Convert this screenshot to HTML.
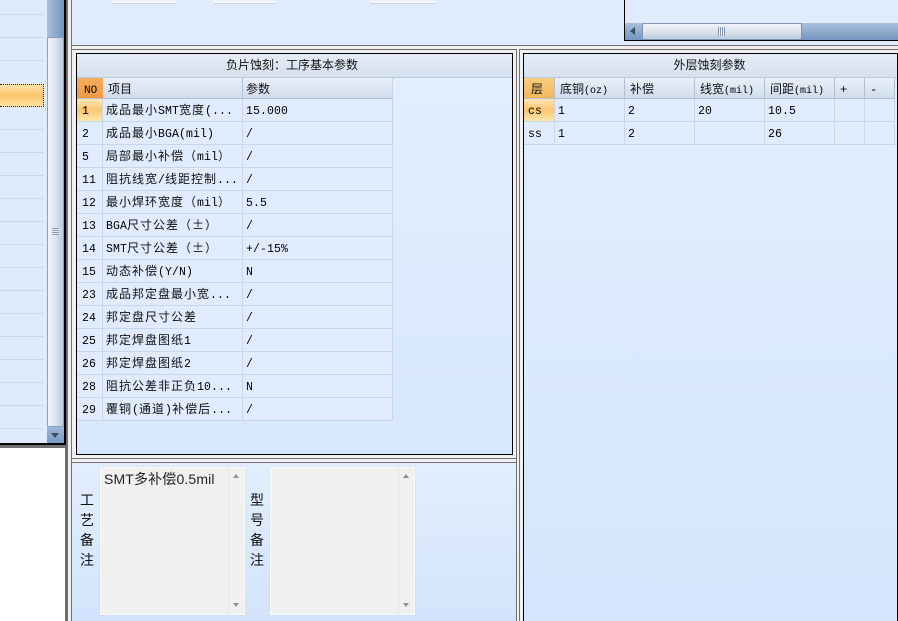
<!DOCTYPE html>
<html><head><meta charset="utf-8">
<style>
html,body{margin:0;padding:0}
body{width:898px;height:621px;overflow:hidden;position:relative;background:#fff;font:12px "WenQuanYi Zen Hei","Noto Sans CJK SC",sans-serif;color:#111}
div{position:absolute;box-sizing:border-box}
i{font:normal 11.5px "Liberation Mono",monospace;letter-spacing:.1px;color:#000}
.t{white-space:nowrap;line-height:14px}
.g{background:#6f6f6f}
.k{background:#000}
.hd{height:21px;top:78px;background:linear-gradient(#e9eff8,#d1dcec);border-right:1px solid #aebfd6;border-bottom:1px solid #aebfd6;line-height:21px;padding-left:5px;white-space:nowrap}
.hd i{font-size:10px;letter-spacing:0}
.r{height:23px;background:#e0ecfd;border-right:1px solid #c6d7ec;border-bottom:1px solid #c6d7ec;line-height:21px;padding-left:3px;white-space:nowrap;letter-spacing:1px}
.l{left:0;width:44px;height:1px;background:#c9d9ec}
</style></head><body>
<!-- left list -->
<div style="left:0;top:0;width:47px;height:444px;background:#dfebfc"></div>
<div class="l" style="top:14px"></div><div class="l" style="top:37px"></div><div class="l" style="top:60px"></div><div class="l" style="top:129px"></div><div class="l" style="top:152px"></div><div class="l" style="top:175px"></div><div class="l" style="top:198px"></div><div class="l" style="top:221px"></div><div class="l" style="top:244px"></div><div class="l" style="top:267px"></div><div class="l" style="top:290px"></div><div class="l" style="top:313px"></div><div class="l" style="top:336px"></div><div class="l" style="top:359px"></div><div class="l" style="top:382px"></div><div class="l" style="top:405px"></div><div class="l" style="top:428px"></div>
<div style="left:0;top:84px;width:44px;height:23px;background:linear-gradient(#fde2ad,#fbc36a 50%,#fee5a6);border:1px dotted #222;border-left:0"></div>
<!-- left scrollbar -->
<div style="left:47px;top:0;width:17px;height:444px;background:linear-gradient(90deg,#a8c0dc,#7595c1)"></div>
<div style="left:47px;top:37px;width:17px;height:390px;background:linear-gradient(90deg,#f0f3f8,#dfe5ee 45%,#bccada);border:1px solid #8aa0bf;border-radius:2px"></div>
<div style="left:52px;top:228px;width:7px;height:7px;background:repeating-linear-gradient(#8a9ab0 0 1px,#e8edf3 1px 2px)"></div>
<div style="left:47px;top:427px;width:17px;height:16px;background:linear-gradient(#9db6d6,#7a9ac4)"></div>
<div style="left:51px;top:433px;width:0;height:0;border:4px solid transparent;border-top:5px solid #3b4a60;border-bottom:0"></div>
<!-- frame strokes -->
<div class="k" style="left:64px;top:0;width:2px;height:445px"></div>
<div class="k" style="left:0;top:443px;width:66px;height:2px"></div>
<div class="g" style="left:0;top:445px;width:68px;height:3px"></div>
<div class="g" style="left:65px;top:445px;width:3px;height:176px"></div>
<div class="g" style="left:66px;top:0;width:2px;height:445px"></div>
<div style="left:68px;top:0;width:3px;height:621px;background:#f0f0f0"></div>
<div class="g" style="left:71px;top:0;width:1px;height:621px"></div>
<!-- top panel -->
<div style="left:72px;top:0;width:826px;height:45px;background:#e0ecfe"></div>
<div style="left:113px;top:0;width:62px;height:3px;background:#eef3fa;border:1px solid #f7f9fc;border-top:0;box-shadow:0 1px 0 #c6d4e6"></div>
<div style="left:214px;top:0;width:62px;height:3px;background:#eef3fa;border:1px solid #f7f9fc;border-top:0;box-shadow:0 1px 0 #c6d4e6"></div>
<div style="left:370px;top:0;width:66px;height:3px;background:#eef3fa;border:1px solid #f7f9fc;border-top:0;box-shadow:0 1px 0 #c6d4e6"></div>
<div class="k" style="left:624px;top:0;width:1px;height:41px"></div>
<div class="k" style="left:624px;top:40px;width:274px;height:1px"></div>
<div style="left:625px;top:23px;width:273px;height:17px;background:linear-gradient(#a8c0dc,#7595c1)"></div>
<div style="left:630px;top:27px;width:0;height:0;border:4px solid transparent;border-right:5px solid #3b4a60;border-left:0"></div>
<div style="left:642px;top:23px;width:160px;height:17px;background:linear-gradient(#f0f3f8,#dfe5ee 45%,#bccada);border:1px solid #7e94b5;border-radius:2px"></div>
<div style="left:718px;top:27px;width:7px;height:9px;background:repeating-linear-gradient(90deg,#8a9ab0 0 1px,#e8edf3 1px 2px)"></div>
<div style="left:72px;top:45px;width:826px;height:4px;background:#f0f0f0"></div>
<div class="g" style="left:72px;top:45px;width:826px;height:1px"></div>
<div class="g" style="left:72px;top:49px;width:445px;height:1px"></div>
<div class="g" style="left:519px;top:49px;width:379px;height:1px"></div>
<div style="left:72px;top:50px;width:444px;height:412px;background:#f0f0f0"></div>
<div style="left:517px;top:46px;width:2px;height:575px;background:#f0f0f0"></div>
<div class="g" style="left:516px;top:49px;width:1px;height:572px"></div>
<div class="g" style="left:519px;top:49px;width:1px;height:572px"></div>
<div style="left:520px;top:50px;width:378px;height:571px;background:#f0f0f0"></div>
<!-- left panel -->
<div style="left:76px;top:53px;width:437px;height:402px;border:1px solid #000;background:linear-gradient(#e3eefd,#d7e8fd)"></div>
<div class="t" style="left:77px;top:54px;width:435px;height:24px;background:linear-gradient(#e5ecf6,#d6e0ef);border-bottom:1px solid #b9c9de"></div>
<div class="t" style="left:77px;top:54px;width:430px;height:24px;line-height:22px;text-align:center">负片蚀刻：工序基本参数</div>
<div class="hd" style="left:77px;width:26px;background:linear-gradient(#f6ad5f,#ef9a45);padding-left:7px;border-right:0"><i style="font-size:11px">NO</i></div>
<div class="hd" style="left:103px;width:140px">项目</div>
<div class="hd" style="left:243px;width:150px;border-right:1px solid #c6d7ec;padding-left:3px">参数</div>

<div class="r" style="left:77px;top:99px;width:26px;padding-left:5px;background:linear-gradient(#fde6b8,#fbc56d 50%,#fee8ad)"><i>1</i></div><div class="r" style="left:103px;top:99px;width:140px">成品最小<i>SMT</i>宽度<i>(...</i></div><div class="r" style="left:243px;top:99px;width:150px"><i>15.000</i></div>
<div class="r" style="left:77px;top:122px;width:26px;padding-left:5px"><i>2</i></div><div class="r" style="left:103px;top:122px;width:140px">成品最小<i>BGA(mil)</i></div><div class="r" style="left:243px;top:122px;width:150px"><i>/</i></div>
<div class="r" style="left:77px;top:145px;width:26px;padding-left:5px"><i>5</i></div><div class="r" style="left:103px;top:145px;width:140px">局部最小补偿（<i>mil</i>）</div><div class="r" style="left:243px;top:145px;width:150px"><i>/</i></div>
<div class="r" style="left:77px;top:168px;width:26px;padding-left:5px"><i>11</i></div><div class="r" style="left:103px;top:168px;width:140px">阻抗线宽<i>/</i>线距控制<i>...</i></div><div class="r" style="left:243px;top:168px;width:150px"><i>/</i></div>
<div class="r" style="left:77px;top:191px;width:26px;padding-left:5px"><i>12</i></div><div class="r" style="left:103px;top:191px;width:140px">最小焊环宽度（<i>mil</i>）</div><div class="r" style="left:243px;top:191px;width:150px"><i>5.5</i></div>
<div class="r" style="left:77px;top:214px;width:26px;padding-left:5px"><i>13</i></div><div class="r" style="left:103px;top:214px;width:140px"><i>BGA</i>尺寸公差（±）</div><div class="r" style="left:243px;top:214px;width:150px"><i>/</i></div>
<div class="r" style="left:77px;top:237px;width:26px;padding-left:5px"><i>14</i></div><div class="r" style="left:103px;top:237px;width:140px"><i>SMT</i>尺寸公差（±）</div><div class="r" style="left:243px;top:237px;width:150px"><i>+/-15%</i></div>
<div class="r" style="left:77px;top:260px;width:26px;padding-left:5px"><i>15</i></div><div class="r" style="left:103px;top:260px;width:140px">动态补偿<i>(Y/N)</i></div><div class="r" style="left:243px;top:260px;width:150px"><i>N</i></div>
<div class="r" style="left:77px;top:283px;width:26px;padding-left:5px"><i>23</i></div><div class="r" style="left:103px;top:283px;width:140px">成品邦定盘最小宽<i>...</i></div><div class="r" style="left:243px;top:283px;width:150px"><i>/</i></div>
<div class="r" style="left:77px;top:306px;width:26px;padding-left:5px"><i>24</i></div><div class="r" style="left:103px;top:306px;width:140px">邦定盘尺寸公差</div><div class="r" style="left:243px;top:306px;width:150px"><i>/</i></div>
<div class="r" style="left:77px;top:329px;width:26px;padding-left:5px"><i>25</i></div><div class="r" style="left:103px;top:329px;width:140px">邦定焊盘图纸<i>1</i></div><div class="r" style="left:243px;top:329px;width:150px"><i>/</i></div>
<div class="r" style="left:77px;top:352px;width:26px;padding-left:5px"><i>26</i></div><div class="r" style="left:103px;top:352px;width:140px">邦定焊盘图纸<i>2</i></div><div class="r" style="left:243px;top:352px;width:150px"><i>/</i></div>
<div class="r" style="left:77px;top:375px;width:26px;padding-left:5px"><i>28</i></div><div class="r" style="left:103px;top:375px;width:140px">阻抗公差非正负<i>10...</i></div><div class="r" style="left:243px;top:375px;width:150px"><i>N</i></div>
<div class="r" style="left:77px;top:398px;width:26px;padding-left:5px"><i>29</i></div><div class="r" style="left:103px;top:398px;width:140px">覆铜<i>(</i>通道<i>)</i>补偿后<i>...</i></div><div class="r" style="left:243px;top:398px;width:150px"><i>/</i></div>

<!-- bottom-left panel -->
<div class="g" style="left:72px;top:458px;width:445px;height:1px"></div>
<div class="g" style="left:72px;top:462px;width:445px;height:1px"></div>
<div style="left:72px;top:463px;width:444px;height:158px;background:linear-gradient(#e2eefd,#d2e4fc)"></div>
<div class="t" style="left:80px;top:490px;width:14px;font-size:14px;line-height:20px;white-space:normal">工艺备注</div>
<div class="t" style="left:250px;top:490px;width:14px;font-size:14px;line-height:20px;white-space:normal">型号备注</div>
<div style="left:100px;top:467px;width:145px;height:148px;background:#f0f0f0;border:1px solid #fafafa;box-shadow:0 0 1px #b9c6d8"></div>
<div style="left:228px;top:468px;width:1px;height:146px;background:#e4e4e4"></div>
<div class="t" style="left:104px;top:471px;font:14px/16px 'Liberation Sans','Noto Sans CJK SC',sans-serif;letter-spacing:.15px;color:#222">SMT多补偿0.5mil</div>
<div style="left:233px;top:474px;border:3px solid transparent;border-bottom:4px solid #909090;border-top:0"></div>
<div style="left:233px;top:603px;border:3px solid transparent;border-top:4px solid #909090;border-bottom:0"></div>
<div style="left:270px;top:467px;width:145px;height:148px;background:#f0f0f0;border:1px solid #fafafa;box-shadow:0 0 1px #b9c6d8"></div>
<div style="left:398px;top:468px;width:1px;height:146px;background:#e4e4e4"></div>
<div style="left:403px;top:474px;border:3px solid transparent;border-bottom:4px solid #909090;border-top:0"></div>
<div style="left:403px;top:603px;border:3px solid transparent;border-top:4px solid #909090;border-bottom:0"></div>

<!-- right panel -->
<div style="left:523px;top:53px;width:375px;height:568px;border:1px solid #000;border-width:1px 1px 0 1px;background:linear-gradient(#e3eefd,#d3e6fd)"></div>
<div class="t" style="left:524px;top:54px;width:373px;height:24px;background:linear-gradient(#e5ecf6,#d6e0ef);border-bottom:1px solid #b9c9de"></div>
<div class="t" style="left:524px;top:54px;width:371px;height:24px;line-height:22px;text-align:center">外层蚀刻参数</div>
<div class="hd" style="left:524px;width:31px;background:linear-gradient(#f8cd7e,#f4b85a);padding-left:7px">层</div>
<div class="hd" style="left:555px;width:70px">底铜<i>(oz)</i></div>
<div class="hd" style="left:625px;width:70px">补偿</div>
<div class="hd" style="left:695px;width:70px">线宽<i>(mil)</i></div>
<div class="hd" style="left:765px;width:70px">间距<i>(mil)</i></div>
<div class="hd" style="left:835px;width:30px"><i style="font-size:12px">+</i></div>
<div class="hd" style="left:865px;width:30px"><i style="font-size:12px">-</i></div>

<div class="r" style="left:524px;top:99px;width:31px;padding-left:4px;background:linear-gradient(#fde6b8,#fbc56d 50%,#fee8ad)"><i>cs</i></div><div class="r" style="left:555px;top:99px;width:70px"><i>1</i></div><div class="r" style="left:625px;top:99px;width:70px"><i>2</i></div><div class="r" style="left:695px;top:99px;width:70px"><i>20</i></div><div class="r" style="left:765px;top:99px;width:70px"><i>10.5</i></div><div class="r" style="left:835px;top:99px;width:30px"></div><div class="r" style="left:865px;top:99px;width:30px"></div>
<div class="r" style="left:524px;top:122px;width:31px;padding-left:4px"><i>ss</i></div><div class="r" style="left:555px;top:122px;width:70px"><i>1</i></div><div class="r" style="left:625px;top:122px;width:70px"><i>2</i></div><div class="r" style="left:695px;top:122px;width:70px"></div><div class="r" style="left:765px;top:122px;width:70px"><i>26</i></div><div class="r" style="left:835px;top:122px;width:30px"></div><div class="r" style="left:865px;top:122px;width:30px"></div>
</body></html>
